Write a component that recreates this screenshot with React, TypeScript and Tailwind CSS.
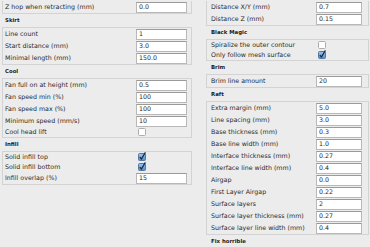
import React from "react";

type Row = { label: string; value?: string; checked?: boolean };
type Section = { title?: string; rows: Row[] };

const LEFT: Section[] = [
  { rows: [{ label: "Z hop when retracting (mm)", value: "0.0" }] },
  {
    title: "Skirt",
    rows: [
      { label: "Line count", value: "1" },
      { label: "Start distance (mm)", value: "3.0" },
      { label: "Minimal length (mm)", value: "150.0" },
    ],
  },
  {
    title: "Cool",
    rows: [
      { label: "Fan full on at height (mm)", value: "0.5" },
      { label: "Fan speed min (%)", value: "100" },
      { label: "Fan speed max (%)", value: "100" },
      { label: "Minimum speed (mm/s)", value: "10" },
      { label: "Cool head lift", checked: false },
    ],
  },
  {
    title: "Infill",
    rows: [
      { label: "Solid infill top", checked: true },
      { label: "Solid infill bottom", checked: true },
      { label: "Infill overlap (%)", value: "15" },
    ],
  },
];

const RIGHT: Section[] = [
  {
    rows: [
      { label: "Distance X/Y (mm)", value: "0.7" },
      { label: "Distance Z (mm)", value: "0.15" },
    ],
  },
  {
    title: "Black Magic",
    rows: [
      { label: "Spiralize the outer contour", checked: false },
      { label: "Only follow mesh surface", checked: true },
    ],
  },
  { title: "Brim", rows: [{ label: "Brim line amount", value: "20" }] },
  {
    title: "Raft",
    rows: [
      { label: "Extra margin (mm)", value: "5.0" },
      { label: "Line spacing (mm)", value: "3.0" },
      { label: "Base thickness (mm)", value: "0.3" },
      { label: "Base line width (mm)", value: "1.0" },
      { label: "Interface thickness (mm)", value: "0.27" },
      { label: "Interface line width (mm)", value: "0.4" },
      { label: "Airgap", value: "0.0" },
      { label: "First Layer Airgap", value: "0.22" },
      { label: "Surface layers", value: "2" },
      { label: "Surface layer thickness (mm)", value: "0.27" },
      { label: "Surface layer line width (mm)", value: "0.4" },
    ],
  },
  { title: "Fix horrible", rows: [] },
];

function Check({ checked }: { checked: boolean }) {
  return (
    <svg width="8" height="8" viewBox="0 0 8 8" className="overflow-visible">
      <defs>
        <linearGradient id="cb" x1="0" y1="0" x2="0" y2="1">
          <stop offset="0" stopColor="#9cc6f2" />
          <stop offset="1" stopColor="#4a8ddb" />
        </linearGradient>
      </defs>
      <rect
        x="0.5"
        y="0.5"
        width="7"
        height="7"
        rx="1"
        fill={checked ? "url(#cb)" : "#ffffff"}
        stroke={checked ? "#5878a0" : "#adadad"}
      />
      {checked && (
        <path d="M1.8 4.2 L3.4 6 L7.4 -0.6" fill="none" stroke="#1c2633" strokeWidth="1.2" />
      )}
    </svg>
  );
}

function Panel({
  section,
  side,
  first,
}: {
  section: Section;
  side: "left" | "right";
  first: boolean;
}) {
  const left = side === "left";
  return (
    <div>
      {section.title && (
        <div
          className={
            "flex h-[13px] items-center text-[5.4px] font-bold text-[#222] " +
            (left ? "pl-[3px]" : "pl-[5px]")
          }
        >
          {section.title}
        </div>
      )}
      {section.rows.length > 0 && (
        <div className={"border border-[#d3d3d3] " + (first ? "border-t-0" : "")}>
          {section.rows.map((r) => (
            <div
              key={r.label}
              className={
                "flex items-center " + (r.value !== undefined ? "h-[12px]" : "h-[10px]")
              }
            >
              <span className={"flex-1 truncate " + (left ? "pl-[2px]" : "pl-[4px]")}>
                {r.label}
              </span>
              <div
                className={
                  "flex items-center " +
                  (left ? "mr-[4px] w-[51px]" : "mr-[6px] w-[46px]")
                }
              >
                {r.value !== undefined ? (
                  <div className="flex h-[11px] w-full items-center border border-[#b8b8b8] border-t-[#9a9a9a] bg-white pl-[2px]">
                    {r.value}
                  </div>
                ) : (
                  <div className="ml-[2px] flex">
                    <Check checked={!!r.checked} />
                  </div>
                )}
              </div>
            </div>
          ))}
        </div>
      )}
    </div>
  );
}

export default function App() {
  return (
    <div className="flex h-[247px] w-[370px] overflow-hidden bg-[#ececec] pt-px font-['DejaVu_Sans',sans-serif] text-[6.3px] text-[#2a2a2a]">
      <div className="ml-[2px] w-[190px]">
        {LEFT.map((s, i) => (
          <Panel key={i} section={s} side="left" first={i === 0} />
        ))}
      </div>
      <div className="ml-[14px] w-[163px]">
        {RIGHT.map((s, i) => (
          <Panel key={i} section={s} side="right" first={i === 0} />
        ))}
      </div>
    </div>
  );
}
